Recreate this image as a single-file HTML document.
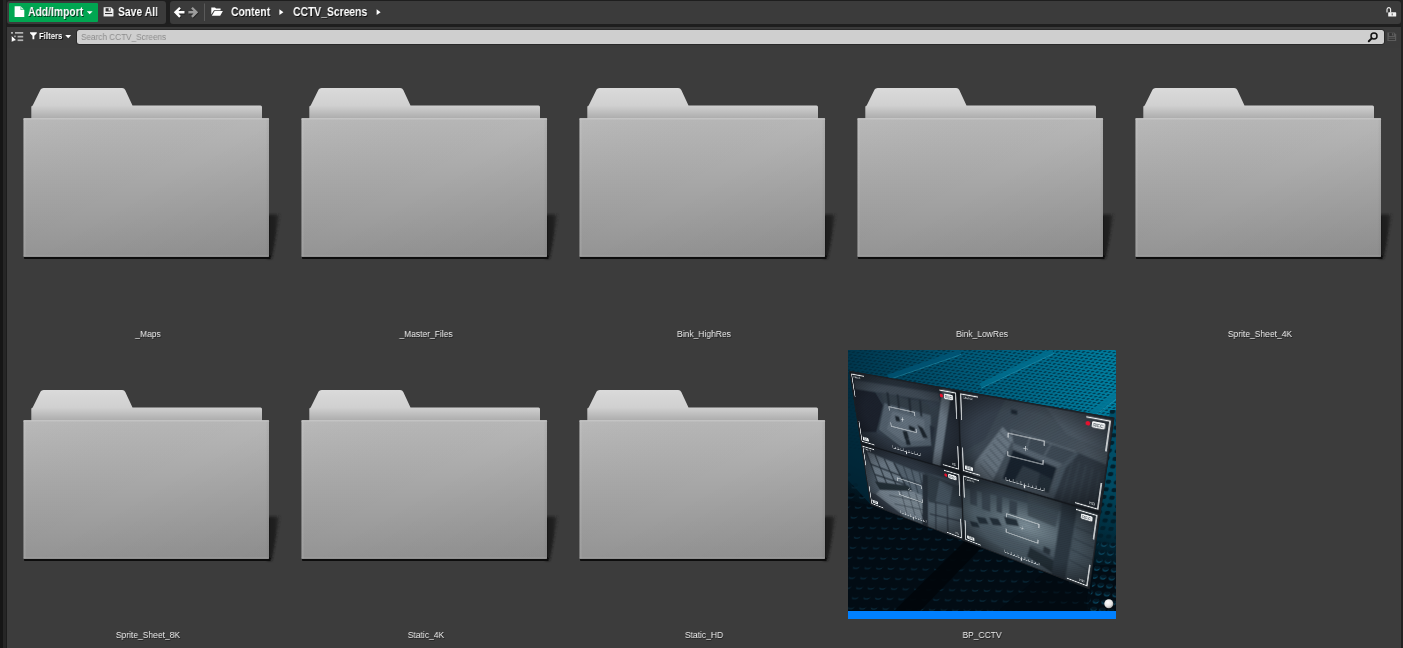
<!DOCTYPE html>
<html><head><meta charset="utf-8"><title>Content Browser</title>
<style>
*{margin:0;padding:0;box-sizing:border-box}
html,body{width:1403px;height:648px;overflow:hidden;background:#3c3c3c;font-family:"Liberation Sans",sans-serif;color:#e6e6e6}
.abs{position:absolute}
#edgeL{left:0;top:0;width:7px;height:648px;background:linear-gradient(90deg,#161616 0,#161616 3px,#262626 3px,#262626 6px,#1d1d1d 6px)}
#topbg{left:0;top:0;width:1403px;height:27px;background:#1e1e1e}
.panel{background:#3b3b3b;border-radius:3px}
#p1{left:7px;top:1px;width:159px;height:23px}
#p2{left:170px;top:1px;width:1231px;height:23px}
#edgeR{left:1401px;top:0;width:2px;height:648px;background:#222}
#row2{left:7px;top:27.4px;width:1394px;height:21px;background:#3b3b3b;border-radius:3px 3px 0 0}
#addbtn{left:9px;top:3px;width:89px;height:19px;background:#00a651;border-radius:1px}
.tb,.lbl,#search span{will-change:transform}
.tb{transform:scaleX(.856);transform-origin:0 50%;font-weight:bold;font-size:12.1px;color:#fff;white-space:nowrap;line-height:12px;text-shadow:1px 1px 0 rgba(0,0,0,.75)}
#search{left:77.3px;top:30.3px;width:1306.7px;height:13.9px;background:#cfcfcf;border-radius:2.5px;box-shadow:0 0 0 .8px rgba(20,20,20,.55)}
#search span{position:absolute;left:4px;top:1.45px;font-size:8.9px;line-height:10px;color:#8c8c8c;white-space:nowrap;transform:scaleX(.924);transform-origin:0 50%}
.lbl{position:absolute;width:278px;text-align:center;font-size:9.6px;line-height:10px;color:#efefef;white-space:nowrap;transform:scaleX(.886);text-shadow:.7px .8px 0 rgba(0,0,0,.55)}
.folder{position:absolute;width:278px;height:200px;filter:blur(.4px)}
#icons,.tb,.lbl,#search{filter:blur(.3px)}
</style></head>
<body>
<svg width="0" height="0" style="position:absolute">
<defs>
<linearGradient id="gBack" x1="0" y1="0" x2="0" y2="1"><stop offset="0" stop-color="#dadada"/><stop offset=".55" stop-color="#d0d0d0"/><stop offset="1" stop-color="#a8a8a8"/></linearGradient>
<linearGradient id="gFront" x1="0" y1="0" x2="0" y2="1"><stop offset="0" stop-color="#b7b7b7"/><stop offset="1" stop-color="#949494"/></linearGradient>
<linearGradient id="gDiag" x1="0" y1="0" x2="1" y2="1"><stop offset="0" stop-color="#fff" stop-opacity=".03"/><stop offset=".5" stop-color="#000" stop-opacity="0"/><stop offset="1" stop-color="#000" stop-opacity=".05"/></linearGradient>
<filter id="fsh2" x="-20%" y="-10%" width="140%" height="120%"><feGaussianBlur stdDeviation=".8"/></filter>
<filter id="fsh" x="-2%" y="-60%" width="104%" height="220%"><feGaussianBlur stdDeviation=".7"/></filter>
<linearGradient id="gSide" x1="0" y1="0" x2="1" y2="0"><stop offset="0" stop-color="#fff" stop-opacity=".14"/><stop offset=".012" stop-color="#fff" stop-opacity="0"/><stop offset=".985" stop-color="#000" stop-opacity="0"/><stop offset="1" stop-color="#000" stop-opacity=".05"/></linearGradient>
<linearGradient id="gSh" x1="0" y1="0" x2="1" y2="0"><stop offset="0" stop-color="#171717"/><stop offset=".55" stop-color="#1f1f1f" stop-opacity=".95"/><stop offset="1" stop-color="#2c2c2c" stop-opacity=".55"/></linearGradient>
<symbol id="folder" viewBox="0 0 278 200" overflow="visible">
  <!-- shadow right -->
  <path d="M259 144.8 L272 144.8 L263.8 188.5 L259 188.5Z" fill="url(#gSh)" filter="url(#fsh2)"/>
  <!-- bottom shadow -->
  <rect x="16" y="185.5" width="246.5" height="3.6" fill="#0e0e0e" rx="1.2" filter="url(#fsh)"/>
  <!-- back + tab -->
  <path d="M23.3 49 L23.3 36.4 L24.7 35.5 L32.6 19.6 Q33.5 18 35.6 18 L114.2 18 Q116.4 18 117.3 19.9 L124.5 35.5 L252.5 35.5 Q254 35.5 254 37 L254 50 Z" fill="url(#gBack)"/>
  <!-- front -->
  <rect x="15.5" y="48.2" width="245.5" height="138.6" fill="url(#gFront)" rx="1"/>
  <rect x="15.5" y="48.2" width="245.5" height="138.6" fill="url(#gSide)" rx="1"/>
  <rect x="15.5" y="48.2" width="245.5" height="138.6" fill="url(#gDiag)" rx="1"/>
  <rect x="15.5" y="48.2" width="245.5" height="1.2" fill="#cdcdcd" opacity=".8"/>
  <rect x="15.5" y="185.6" width="245.5" height="1.2" fill="#b0b0b0" opacity=".6"/>
</symbol>
</defs></svg>

<div class="abs" id="topbg"></div>
<div class="abs panel" id="p1"></div>
<div class="abs panel" id="p2"></div>
<div class="abs" id="row2"></div>
<div class="abs" id="edgeL"></div>
<div class="abs" id="edgeR"></div>

<div class="abs" id="addbtn"></div>
<div class="abs tb" style="left:28.3px;top:5.75px">Add/Import</div>
<div class="abs tb" style="left:117.6px;top:5.75px">Save All</div>
<div class="abs tb" style="left:230.7px;top:5.75px">Content</div>
<div class="abs tb" style="left:292.9px;top:5.75px">CCTV_Screens</div>
<div class="abs tb" id="filt" style="left:38.9px;top:30.6px;font-size:8.8px;line-height:10px;transform:scaleX(.885)">Filters</div>

<div class="abs" id="search"><span>Search CCTV_Screens</span></div>

<svg class="abs" id="icons" width="1403" height="50" viewBox="0 0 1403 50" style="left:0;top:0">
 <!-- document icon -->
 <path d="M14.6 6.2 H20.6 L24.3 9.9 V17 H14.6Z" fill="#fff"/>
 <path d="M20.6 6.2 V9.9 H24.3Z" fill="#00a651"/>
 <path d="M21.2 6.8 L23.8 9.4 H21.2Z" fill="#dff5e8"/>
 <!-- add dropdown -->
 <path d="M86.8 11.2 H92.6 L89.7 14.2Z" fill="#fff"/>
 <!-- save icon -->
 <g>
  <path d="M103.6 7.3 H111.2 L113.5 9.6 V16.4 H103.6Z" fill="#1a1a1a" opacity=".6" transform="translate(.5 .7)"/>
  <path d="M103.6 7.3 H111.2 L113.5 9.6 V16.4 H103.6Z" fill="#f0f0f0"/>
  <rect x="105.6" y="8.2" width="5" height="3.3" fill="#333"/>
  <rect x="108.6" y="8.2" width="1.4" height="2.4" fill="#f0f0f0"/>
  <rect x="105" y="13" width="7.2" height="1.1" fill="#333"/>
 </g>
 <!-- back arrow -->
 <path d="M173.8 12.3 L179.2 6.9 L180.9 8.6 L178.5 11 H184.5 V13.6 H178.5 L180.9 16 L179.2 17.7Z" fill="#111" opacity=".7" transform="translate(.7 .8)"/>
 <path d="M173.8 12.3 L179.2 6.9 L180.9 8.6 L178.5 11 H184.5 V13.6 H178.5 L180.9 16 L179.2 17.7Z" fill="#fff"/>
 <!-- fwd arrow -->
 <path d="M198.2 12.3 L192.8 6.9 L191.1 8.6 L193.5 11 H188.4 V13.6 H193.5 L191.1 16 L192.8 17.7Z" fill="#111" opacity=".6" transform="translate(.7 .8)"/>
 <path d="M198.2 12.3 L192.8 6.9 L191.1 8.6 L193.5 11 H188.4 V13.6 H193.5 L191.1 16 L192.8 17.7Z" fill="#9c9c9c"/>
 <!-- separator -->
 <rect x="204" y="3.5" width="1" height="17.5" fill="#5a5a5a"/>
 <!-- folder open icon -->
 <path d="M211.3 7.4 H215 L216 8.5 H220.6 V10.2 H214 L211.3 14.6Z" fill="#fff"/>
 <path d="M214.6 11 H222.9 L220.2 15.7 H211.8Z" fill="#fff"/>
 <!-- breadcrumb triangles -->
 <path d="M279.4 9.3 L283.4 12.2 L279.4 15.1Z" fill="#fff"/>
 <path d="M376.6 9.3 L380.6 12.2 L376.6 15.1Z" fill="#fff"/>
 <!-- lock -->
 <path d="M1387 12.4 V9.6 A1.8 2 0 0 1 1390.6 9.6 V12.4" fill="none" stroke="#f2f2f2" stroke-width="1.1"/>
 <rect x="1388.2" y="12.3" width="8" height="4.3" rx=".6" fill="#f2f2f2"/>
 <rect x="1391.7" y="13.4" width="1" height="2" fill="#555"/>
 <!-- sources icon -->
 <g fill="#b4b4b4">
  <rect x="11" y="32" width="2" height="1.7"/>
  <rect x="15" y="32" width="8.2" height="1.7"/>
  <rect x="17.6" y="35.8" width="5.6" height="1.7"/>
  <rect x="17.6" y="39.4" width="5.6" height="1.7"/>
  <rect x="14.2" y="35.6" width="1.5" height="1.6"/>
 </g>
 <path d="M11.4 35.4 V42.3 L13.4 41.2 L16.5 40.2Z" fill="#fff" stroke="#1c1c1c" stroke-width=".5"/>
 <!-- funnel -->
 <path d="M30 32.2 H36.8 V33.2 L34.3 35.8 V39.2 H32.5 V35.8 L30 33.2Z" fill="#fff"/>
 <!-- filter dropdown -->
 <path d="M65.2 35 H71.2 L68.2 38.3Z" fill="#fff"/>
 <!-- magnifier -->
 <circle cx="1374" cy="36.1" r="3" fill="none" stroke="#111" stroke-width="1.5"/>
 <path d="M1371.7 38.4 L1368.8 41.2" stroke="#111" stroke-width="2" stroke-linecap="round"/>
 <!-- small save -->
 <g>
  <path d="M1387.4 32.5 H1394.2 L1396.2 34.5 V41 H1387.4Z" fill="#5c5c5c"/>
  <rect x="1389.2" y="32.8" width="4.4" height="3.2" fill="#333"/>
  <rect x="1391.9" y="33.2" width="1.1" height="2.3" fill="#5c5c5c"/>
  <rect x="1388.6" y="37.4" width="6.4" height=".9" fill="#333"/>
  <rect x="1388.6" y="39.1" width="6.4" height=".9" fill="#333"/>
 </g>
</svg>

<!-- folders row 1 -->
<svg class="folder" style="left:7.5px;top:70px"><use href="#folder"/></svg>
<svg class="folder" style="left:285.5px;top:70px"><use href="#folder"/></svg>
<svg class="folder" style="left:563.5px;top:70px"><use href="#folder"/></svg>
<svg class="folder" style="left:841.5px;top:70px"><use href="#folder"/></svg>
<svg class="folder" style="left:1119.5px;top:70px"><use href="#folder"/></svg>
<!-- row 2 -->
<svg class="folder" style="left:7.5px;top:371.7px"><use href="#folder"/></svg>
<svg class="folder" style="left:285.5px;top:371.7px"><use href="#folder"/></svg>
<svg class="folder" style="left:563.5px;top:371.7px"><use href="#folder"/></svg>

<div class="lbl" style="left:8.6px;top:328.55px">_Maps</div>
<div class="lbl" style="left:286.6px;top:328.55px">_Master_Files</div>
<div class="lbl" style="left:564.6px;top:328.55px">Bink_HighRes</div>
<div class="lbl" style="left:842.6px;top:328.55px">Bink_LowRes</div>
<div class="lbl" style="left:1120.6px;top:328.55px">Sprite_Sheet_4K</div>
<div class="lbl" style="left:8.6px;top:630.3px">Sprite_Sheet_8K</div>
<div class="lbl" style="left:286.6px;top:630.3px">Static_4K</div>
<div class="lbl" style="left:564.6px;top:630.3px">Static_HD</div>
<div class="lbl" style="left:842.6px;top:630.3px">BP_CCTV</div>

<!-- thumbnail -->
<div class="abs" id="thumb" style="left:847.5px;top:350px;width:268.5px;height:269px;background:#0080ff;overflow:hidden">
<div style="position:absolute;left:0;top:0;width:268.5px;height:261px;overflow:hidden;background:#02202c">
<svg id="tbg" width="268.5" height="261" viewBox="0 0 268.5 261" style="position:absolute;left:0;top:0">
<defs>
<linearGradient id="bgT" x1="0" y1="0" x2="1" y2=".25"><stop offset="0" stop-color="#00364d"/><stop offset=".4" stop-color="#005674"/><stop offset="1" stop-color="#0080a1"/></linearGradient>
<linearGradient id="bgV" x1=".28" y1="0" x2="0" y2="1"><stop offset="0" stop-color="#000" stop-opacity="0"/><stop offset=".3" stop-color="#000" stop-opacity=".1"/><stop offset=".46" stop-color="#01121c" stop-opacity=".55"/><stop offset=".6" stop-color="#020d15" stop-opacity=".95"/><stop offset="1" stop-color="#020b12" stop-opacity="1"/></linearGradient>
<pattern id="dotS" width="4.6" height="3.4" patternUnits="userSpaceOnUse" patternTransform="matrix(1 .12 -.9 .8 0 0)"><ellipse cx="2.3" cy="1.7" rx="1.35" ry="1" fill="#00283a" opacity=".8"/></pattern>
<pattern id="dotB" width="11.6" height="10" patternUnits="userSpaceOnUse" patternTransform="matrix(1 .02 -.42 1 0 0)"><ellipse cx="5.8" cy="5" rx="3.1" ry="2.1" fill="#08293a"/><ellipse cx="5.8" cy="3.9" rx="3.1" ry="2" fill="#020c14"/></pattern>
<pattern id="dotR" width="8.2" height="7.6" patternUnits="userSpaceOnUse" patternTransform="matrix(1 .1 -.3 1 0 0)"><ellipse cx="4.1" cy="3.8" rx="2.7" ry="2.1" fill="#01222f"/></pattern>
<pattern id="dotR2" width="8.6" height="8" patternUnits="userSpaceOnUse" patternTransform="matrix(1 .1 -.3 1 0 0)"><ellipse cx="4.3" cy="4" rx="2.9" ry="2.2" fill="#0a4a64"/><ellipse cx="4.3" cy="3.2" rx="2.6" ry="1.8" fill="#031824"/></pattern>
<linearGradient id="fadeR" x1="0" y1="0" x2="0" y2="1"><stop offset="0" stop-color="#fff" stop-opacity="1"/><stop offset=".55" stop-color="#fff" stop-opacity="1"/><stop offset=".8" stop-color="#fff" stop-opacity="0"/></linearGradient>
<mask id="mR"><rect x="230" y="40" width="40" height="221" fill="url(#fadeR)"/></mask>
<radialGradient id="ball" cx=".4" cy=".35" r=".7"><stop offset="0" stop-color="#ffffff"/><stop offset=".6" stop-color="#e6e6e6"/><stop offset="1" stop-color="#9a9a9a"/></radialGradient>
</defs>
<rect width="268.5" height="261" fill="url(#bgT)"/>
<rect width="268.5" height="100" fill="url(#dotS)"/>
<g stroke-width="5" stroke-opacity=".9"><path d="M40 27 L112 2" stroke="#005474"/><path d="M132.5 35.5 L205 1" stroke="#006d8d"/><path d="M243 64 L269 44.5" stroke="#007797" stroke-width="6"/></g>
<g stroke="#2aa5c4" stroke-opacity=".55" stroke-width=".9"><path d="M41 29.6 L113 4.6"/><path d="M133.5 38 L206 3.5"/><path d="M245 67 L269 48.5"/></g>
<path d="M262 60 L268.5 60 V261 H236Z" fill="#00526d"/>
<path d="M262 60 L268.5 60 V261 H236Z" fill="url(#dotR)" mask="url(#mR)"/>
<rect width="268.5" height="261" fill="url(#bgV)"/>
<path d="M0 150 L24 156 L242 240 L246 215 L268.5 215 V261 H0Z" fill="#020c14"/>
<path d="M0 120 L24 156 L242 240 L240 261 H0Z" fill="url(#dotB)"/>
<path d="M244 236 L250 190 L268.5 190 V261 H240Z" fill="url(#dotR2)"/>
<path d="M46 261 L120 188 L136 195 L72 261Z" fill="#01060a" opacity=".9"/>
<path d="M150 261 L205 215 L240 232 L238 261Z" fill="#02080e" opacity=".5"/>
<path d="M0 22 L2 22 L24 156 L0 130Z" fill="#01283a" opacity=".75"/>
<circle cx="261.2" cy="254.6" r="4.6" fill="#0a0a0a" opacity=".6"/>
<circle cx="260.8" cy="253.8" r="4.5" fill="url(#ball)"/>
</svg>
<div style="position:absolute;left:0;top:0;width:400px;height:240px;transform-origin:0 0;transform:matrix3d(0.459791,0.065770,0,-0.00076298, 0.105074,0.673058,0,0.00073478, 0,0,1,0, 1.2500,20.8000,0,1)">
<svg width="400" height="240" viewBox="0 0 400 240" style="display:block">
<defs>
<clipPath id="cpA"><rect x="0" y="0" width="200" height="120"/></clipPath>
<clipPath id="cpL"><rect x="0" y="0" width="200" height="120"/></clipPath>
<linearGradient id="gA" x1="0" y1="0" x2="1" y2="1"><stop offset="0" stop-color="#30363d"/><stop offset=".5" stop-color="#434a53"/><stop offset="1" stop-color="#282d33"/></linearGradient>
<linearGradient id="gB" x1="0" y1="0" x2="1" y2=".4"><stop offset="0" stop-color="#434a52"/><stop offset=".5" stop-color="#525a62"/><stop offset="1" stop-color="#60686f"/></linearGradient>
<linearGradient id="gC" x1="0" y1="0" x2="0" y2="1"><stop offset="0" stop-color="#4c555e"/><stop offset="1" stop-color="#6a757e"/></linearGradient>
<linearGradient id="gD" x1="0" y1="0" x2="0" y2="1"><stop offset="0" stop-color="#515c63"/><stop offset=".5" stop-color="#66737a"/><stop offset="1" stop-color="#566168"/></linearGradient>
<radialGradient id="gHaze"><stop offset="0" stop-color="#a3b2b8" stop-opacity=".9"/><stop offset="1" stop-color="#93a2a8" stop-opacity="0"/></radialGradient>
<filter id="bl" x="-5%" y="-5%" width="110%" height="110%"><feGaussianBlur stdDeviation="1.15"/></filter>
<radialGradient id="vig" cx=".5" cy=".5" r=".72"><stop offset="0" stop-color="#0a0c10" stop-opacity="0"/><stop offset=".55" stop-color="#0a0c10" stop-opacity=".08"/><stop offset="1" stop-color="#07090c" stop-opacity=".72"/></radialGradient>
<pattern id="scan" width="3" height="3" patternUnits="userSpaceOnUse" patternTransform="rotate(-35)"><rect width="3" height="1" fill="#000" opacity=".1"/></pattern>
</defs>
<rect width="400" height="240" fill="#14171b"/>
<g filter="url(#bl)">
<g clip-path="url(#cpA)">
<rect x="0" y="0" width="200" height="120" fill="url(#gA)"/>
<path d="M0 0 H200 V18 L120 26 L40 22 L0 30Z" fill="#343a42"/>
<path d="M0 28 L48 24 L62 44 L40 92 L0 100Z" fill="#20242a"/>
<path d="M8 13 L168 9 L170 21 L8 27Z" fill="#515961"/>
<path d="M66 40 L152 43 L149 90 L91 106 L47 86Z" fill="#69737d"/>
<path d="M80 50 L140 52 L138 84 L95 96 L64 82Z" fill="#808a94" opacity=".75"/>
<path d="M60 24 L150 28 L152 43 L66 40Z" fill="#3f464e"/>
<g fill="#2a2f36"><rect x="72" y="22" width="5" height="22"/><rect x="92" y="22" width="4" height="24"/><rect x="113" y="24" width="5" height="22"/><rect x="133" y="24" width="4" height="24"/></g>
<path d="M176 0 H190 L163 120 H149Z" fill="#8a949e"/>
<path d="M190 0 H200 V120 H163Z" fill="#30353c"/>
<path d="M150 88 L158 60 L149 58 L149 90 L91 106 L100 120 H150Z" fill="#2e333a"/>
<path d="M0 100 L40 92 L91 106 L100 120 H0Z" fill="#3a4048"/>
<g fill="#22262c"><path d="M96 78 l9 -2 l3 12 l-9 3z"/><path d="M110 66 l12 2 l-2 7 l-11 -2z"/><path d="M126 62 l10 3 l8 14 l-9 2z"/><path d="M84 56 l8 0 l2 8 l-9 1z"/><path d="M100 90 l8 -1 l2 9 l-9 2z"/></g>
</g>
<g transform="translate(200 0)" clip-path="url(#cpL)">
<rect x="0" y="0" width="200" height="120" fill="url(#gB)"/>
<path d="M0 0 H70 L40 60 L0 90Z" fill="#444b53" opacity=".85"/>
<path d="M66 37 L81 50 L51 120 H20 L24 97Z" fill="#858f98"/>
<path d="M24 97 L66 37 L60 36 L14 92Z" fill="#50575f"/>
<g stroke="#59626a" stroke-width="1.6"><path d="M62 45 L77 56 M57 54 L73 66 M52 63 L69 76 M47 72 L64 86 M42 81 L60 96 M37 90 L56 106 M32 99 L52 116"/></g>
<path d="M78 39 L162 48.5 L148 68 L81 56Z" fill="#4d555d"/>
<path d="M81 56 L148 68 L141 76 L81 65Z" fill="#6a737c"/>
<path d="M81.5 65 L141 74.5 L133 113 L67 111Z" fill="#1f2329"/>
<path d="M96 84 L120 88 L116 112 L84 111Z" fill="#3b424a"/>
<path d="M120 88 L136 92 L133 113 L116 112Z" fill="#2c3239"/>
<path d="M162 48.5 L200 56 V120 H133 L148 68Z" fill="#3a4047"/>
<path d="M148 68 L162 48.5 L166 50 L152 72 L140 120 H133Z" fill="#59626a"/>
<g stroke="#4d555c" stroke-width="1.2"><path d="M160 60 L150 120 M168 60 L160 120 M176 62 L170 120 M184 64 L180 120 M192 66 L190 120"/></g>
<g stroke="#8a949c" stroke-width="1" fill="none"><path d="M78 39 L162 48.5 M78 39 L81 56 M104 42 L100 59 M132 45 L124 63"/></g>
<rect x="77" y="12" width="9" height="6" fill="#23272d"/>
<path d="M120 0 H200 V40 L150 30Z" fill="#6d767e" opacity=".45"/>
</g>
<g transform="translate(0 120)" clip-path="url(#cpL)">
<rect x="0" y="0" width="200" height="120" fill="url(#gC)"/>
<path d="M0 0 H200 V14 L110 20 L0 10Z" fill="#3a4149"/>
<path d="M10 12 L70 18 L96 64 L28 70Z" fill="#8a959f"/>
<path d="M74 18 L128 22 L132 62 L100 64Z" fill="#6c7781"/>
<g stroke="#2b3138" stroke-width="3" fill="none"><path d="M10 12 L28 70 M30 14 L50 68 M50 16 L73 66 M70 18 L96 64 M16 34 L82 38 M22 52 L90 52"/></g>
<g stroke="#353c44" stroke-width="2.2" fill="none"><path d="M90 19 L104 64 M106 20 L116 63 M122 21 L128 62 M84 40 L130 42"/></g>
<path d="M20 66 L96 52 L104 60 L30 80Z" fill="#2a3036"/>
<path d="M30 80 L104 60 L134 62 L128 108 L74 114 L18 92Z" fill="#939da6"/>
<path d="M60 78 L110 66 L126 70 L122 100 L84 106Z" fill="#98a2aa" opacity=".7"/>
<g stroke="#3c434b" stroke-width="1.6"><path d="M78 66 L86 108 M94 62 L104 106 M110 62 L120 104 M50 84 L124 74 M60 98 L126 88"/></g>
<path d="M132 18 L200 24 V60 L136 70Z" fill="#3d444c"/>
<path d="M128 22 L138 22 L130 120 H118Z" fill="#2d3339"/>
<path d="M136 70 L200 60 V120 H130Z" fill="#69747d"/>
<g stroke="#30363d" stroke-width="2.4"><path d="M150 66 L146 120 M172 64 L170 120 M136 92 L200 84"/></g>
<path d="M160 24 L184 28 L176 62 L150 64Z" fill="#59636c"/>
<path d="M0 92 L18 92 L74 114 L80 120 H0Z" fill="#444c54"/>
</g>
<g transform="translate(200 120)" clip-path="url(#cpL)">
<rect x="0" y="0" width="200" height="120" fill="url(#gD)"/>
<path d="M0 0 H200 V10 L0 24Z" fill="#40484f" opacity=".8"/>
<ellipse cx="105" cy="52" rx="70" ry="34" fill="url(#gHaze)"/>
<g fill="#454e55"><rect x="14" y="22" width="12" height="26"/><rect x="34" y="20" width="14" height="30"/><rect x="58" y="18" width="9" height="28"/><rect x="78" y="20" width="12" height="22"/></g>
<g fill="#2b3238"><path d="M24 66 l16 -3 l5 9 l-16 5z"/><path d="M46 60 l15 -3 l6 10 l-15 4z"/><path d="M70 50 l20 -2 l4 10 l-20 4z"/><path d="M12 78 l14 -2 l4 8 l-14 3z"/></g>
<path d="M112 84 L150 92 L148 116 L108 104Z" fill="#2a3036"/>
<path d="M114 82 L152 90 L150 95 L112 87Z" fill="#4c555c"/>
<path d="M132 76 l10 2 l-1 10 l-10 -2z" fill="#30373d"/>
<path d="M152 0 H172 L166 120 H146Z" fill="#394147"/>
<path d="M172 0 H200 V120 H166Z" fill="#58636a"/>
<g stroke="#3c444b" stroke-width="1.5"><path d="M172 30 L200 33 M171 48 L200 52 M170 66 L200 71 M169 84 L200 90"/></g>
<path d="M104 0 L150 0 L146 40 L106 36Z" fill="#4a5359" opacity=".8"/>
<path d="M0 96 L60 104 L120 120 H0Z" fill="#525d64" opacity=".8"/>
</g>
</g>
<rect width="400" height="240" fill="#0c2a40" opacity=".2"/>
<rect width="400" height="240" fill="url(#scan)"/>
<rect x="0" y="0" width="200" height="120" fill="url(#vig)"/>
<rect x="200" y="0" width="200" height="120" fill="url(#vig)"/>
<rect x="0" y="120" width="200" height="120" fill="url(#vig)"/>
<rect x="200" y="120" width="200" height="120" fill="url(#vig)"/>
<path d="M200 0 V240 M0 120 H400" stroke="#12151a" stroke-width="2.6" opacity=".85"/>
<rect x=".8" y=".8" width="398.4" height="238.4" fill="none" stroke="#1b1f24" stroke-width="1.6"/>
<g transform="translate(0 0)" fill="none" stroke="#f4f6f7" stroke-width="1.5">
<path d="M4 40 V4.5 H30 M170 4.5 H196 V40 M4 80 V115.5 H32 M168 115.5 H196 V80"/>
<path d="M74 50 V44 H123 V50 M74 69 V75 H123 V69" stroke-width="1.2" stroke="#e3e7ea"/>
<path d="M98.5 56 V63 M95 59.5 H102" stroke-width=".8" stroke="#cfd5d9"/>
<path d="M72 111.5 H127" stroke-width=".8" stroke="#dfe4e7"/>
<path d="M72 111.5 V107 M77.5 111.5 V108.5 M83 111.5 V107 M88.5 111.5 V108.5 M94 111.5 V107 M99.5 111.5 V108.5 M105 111.5 V107 M110.5 111.5 V108.5 M116 111.5 V107 M121.5 111.5 V108.5 M127 111.5 V107 " stroke-width=".7" stroke="#dfe4e7"/>
<path d="M99.5 112 V115.5" stroke-width="1.6" stroke="#f4f6f7"/>
</g>
<g transform="translate(0 0)">
<circle cx="172.5" cy="11.5" r="2.6" fill="#e8102e"/>
<rect x="177" y="8" width="14.5" height="7.2" rx="1.6" fill="#f2f4f5"/>
<text x="184.2" y="13.9" font-family="Liberation Sans,sans-serif" font-size="5.6" font-weight="bold" text-anchor="middle" fill="#59636b">REC</text>
<text x="7" y="10.5" font-family="Liberation Sans,sans-serif" font-size="4.2" fill="#dfe4e7">CAM 01</text>
<rect x="7" y="106.5" width="13" height="6" rx=".8" fill="#eef1f2"/>
<text x="13.5" y="111.4" font-family="Liberation Sans,sans-serif" font-size="4.6" font-weight="bold" text-anchor="middle" fill="#5a646c">ISO</text>
<text x="192" y="112.5" font-family="Liberation Sans,sans-serif" font-size="4.6" text-anchor="end" fill="#e9edef">HD</text>
</g><g transform="translate(200 0)" fill="none" stroke="#f4f6f7" stroke-width="1.5">
<path d="M4 40 V4.5 H30 M170 4.5 H196 V40 M4 80 V115.5 H32 M168 115.5 H196 V80"/>
<path d="M74 50 V44 H123 V50 M74 69 V75 H123 V69" stroke-width="1.2" stroke="#e3e7ea"/>
<path d="M98.5 56 V63 M95 59.5 H102" stroke-width=".8" stroke="#cfd5d9"/>
<path d="M72 111.5 H127" stroke-width=".8" stroke="#dfe4e7"/>
<path d="M72 111.5 V107 M77.5 111.5 V108.5 M83 111.5 V107 M88.5 111.5 V108.5 M94 111.5 V107 M99.5 111.5 V108.5 M105 111.5 V107 M110.5 111.5 V108.5 M116 111.5 V107 M121.5 111.5 V108.5 M127 111.5 V107 " stroke-width=".7" stroke="#dfe4e7"/>
<path d="M99.5 112 V115.5" stroke-width="1.6" stroke="#f4f6f7"/>
</g>
<g transform="translate(200 0)">
<circle cx="172.5" cy="11.5" r="2.6" fill="#e8102e"/>
<rect x="177" y="8" width="14.5" height="7.2" rx="1.6" fill="#f2f4f5"/>
<text x="184.2" y="13.9" font-family="Liberation Sans,sans-serif" font-size="5.6" font-weight="bold" text-anchor="middle" fill="#59636b">REC</text>
<text x="7" y="10.5" font-family="Liberation Sans,sans-serif" font-size="4.2" fill="#dfe4e7">CAM 02</text>
<rect x="7" y="106.5" width="13" height="6" rx=".8" fill="#eef1f2"/>
<text x="13.5" y="111.4" font-family="Liberation Sans,sans-serif" font-size="4.6" font-weight="bold" text-anchor="middle" fill="#5a646c">ISO</text>
<text x="192" y="112.5" font-family="Liberation Sans,sans-serif" font-size="4.6" text-anchor="end" fill="#e9edef">HD</text>
</g><g transform="translate(0 120)" fill="none" stroke="#f4f6f7" stroke-width="1.5">
<path d="M4 40 V4.5 H30 M170 4.5 H196 V40 M4 80 V115.5 H32 M168 115.5 H196 V80"/>
<path d="M74 50 V44 H123 V50 M74 69 V75 H123 V69" stroke-width="1.2" stroke="#e3e7ea"/>
<path d="M98.5 56 V63 M95 59.5 H102" stroke-width=".8" stroke="#cfd5d9"/>
<path d="M72 111.5 H127" stroke-width=".8" stroke="#dfe4e7"/>
<path d="M72 111.5 V107 M77.5 111.5 V108.5 M83 111.5 V107 M88.5 111.5 V108.5 M94 111.5 V107 M99.5 111.5 V108.5 M105 111.5 V107 M110.5 111.5 V108.5 M116 111.5 V107 M121.5 111.5 V108.5 M127 111.5 V107 " stroke-width=".7" stroke="#dfe4e7"/>
<path d="M99.5 112 V115.5" stroke-width="1.6" stroke="#f4f6f7"/>
</g>
<g transform="translate(0 120)">
<circle cx="172.5" cy="11.5" r="2.6" fill="#e8102e"/>
<rect x="177" y="8" width="14.5" height="7.2" rx="1.6" fill="#f2f4f5"/>
<text x="184.2" y="13.9" font-family="Liberation Sans,sans-serif" font-size="5.6" font-weight="bold" text-anchor="middle" fill="#59636b">REC</text>
<text x="7" y="10.5" font-family="Liberation Sans,sans-serif" font-size="4.2" fill="#dfe4e7">CAM 03</text>
<rect x="7" y="106.5" width="13" height="6" rx=".8" fill="#eef1f2"/>
<text x="13.5" y="111.4" font-family="Liberation Sans,sans-serif" font-size="4.6" font-weight="bold" text-anchor="middle" fill="#5a646c">ISO</text>
<text x="192" y="112.5" font-family="Liberation Sans,sans-serif" font-size="4.6" text-anchor="end" fill="#e9edef">HD</text>
</g><g transform="translate(200 120)" fill="none" stroke="#f4f6f7" stroke-width="1.5">
<path d="M4 40 V4.5 H30 M170 4.5 H196 V40 M4 80 V115.5 H32 M168 115.5 H196 V80"/>
<path d="M74 50 V44 H123 V50 M74 69 V75 H123 V69" stroke-width="1.2" stroke="#e3e7ea"/>
<path d="M98.5 56 V63 M95 59.5 H102" stroke-width=".8" stroke="#cfd5d9"/>
<path d="M72 111.5 H127" stroke-width=".8" stroke="#dfe4e7"/>
<path d="M72 111.5 V107 M77.5 111.5 V108.5 M83 111.5 V107 M88.5 111.5 V108.5 M94 111.5 V107 M99.5 111.5 V108.5 M105 111.5 V107 M110.5 111.5 V108.5 M116 111.5 V107 M121.5 111.5 V108.5 M127 111.5 V107 " stroke-width=".7" stroke="#dfe4e7"/>
<path d="M99.5 112 V115.5" stroke-width="1.6" stroke="#f4f6f7"/>
</g>
<g transform="translate(200 120)">
<rect x="177" y="8" width="14.5" height="7.2" rx="1.6" fill="#f2f4f5"/>
<text x="184.2" y="13.9" font-family="Liberation Sans,sans-serif" font-size="5.6" font-weight="bold" text-anchor="middle" fill="#59636b">REC</text>
<text x="7" y="10.5" font-family="Liberation Sans,sans-serif" font-size="4.2" fill="#dfe4e7">CAM 04</text>
<rect x="7" y="106.5" width="13" height="6" rx=".8" fill="#eef1f2"/>
<text x="13.5" y="111.4" font-family="Liberation Sans,sans-serif" font-size="4.6" font-weight="bold" text-anchor="middle" fill="#5a646c">ISO</text>
<text x="192" y="112.5" font-family="Liberation Sans,sans-serif" font-size="4.6" text-anchor="end" fill="#e9edef">HD</text>
</g>
</svg>
</div>
</div>
</div>
</body></html>
